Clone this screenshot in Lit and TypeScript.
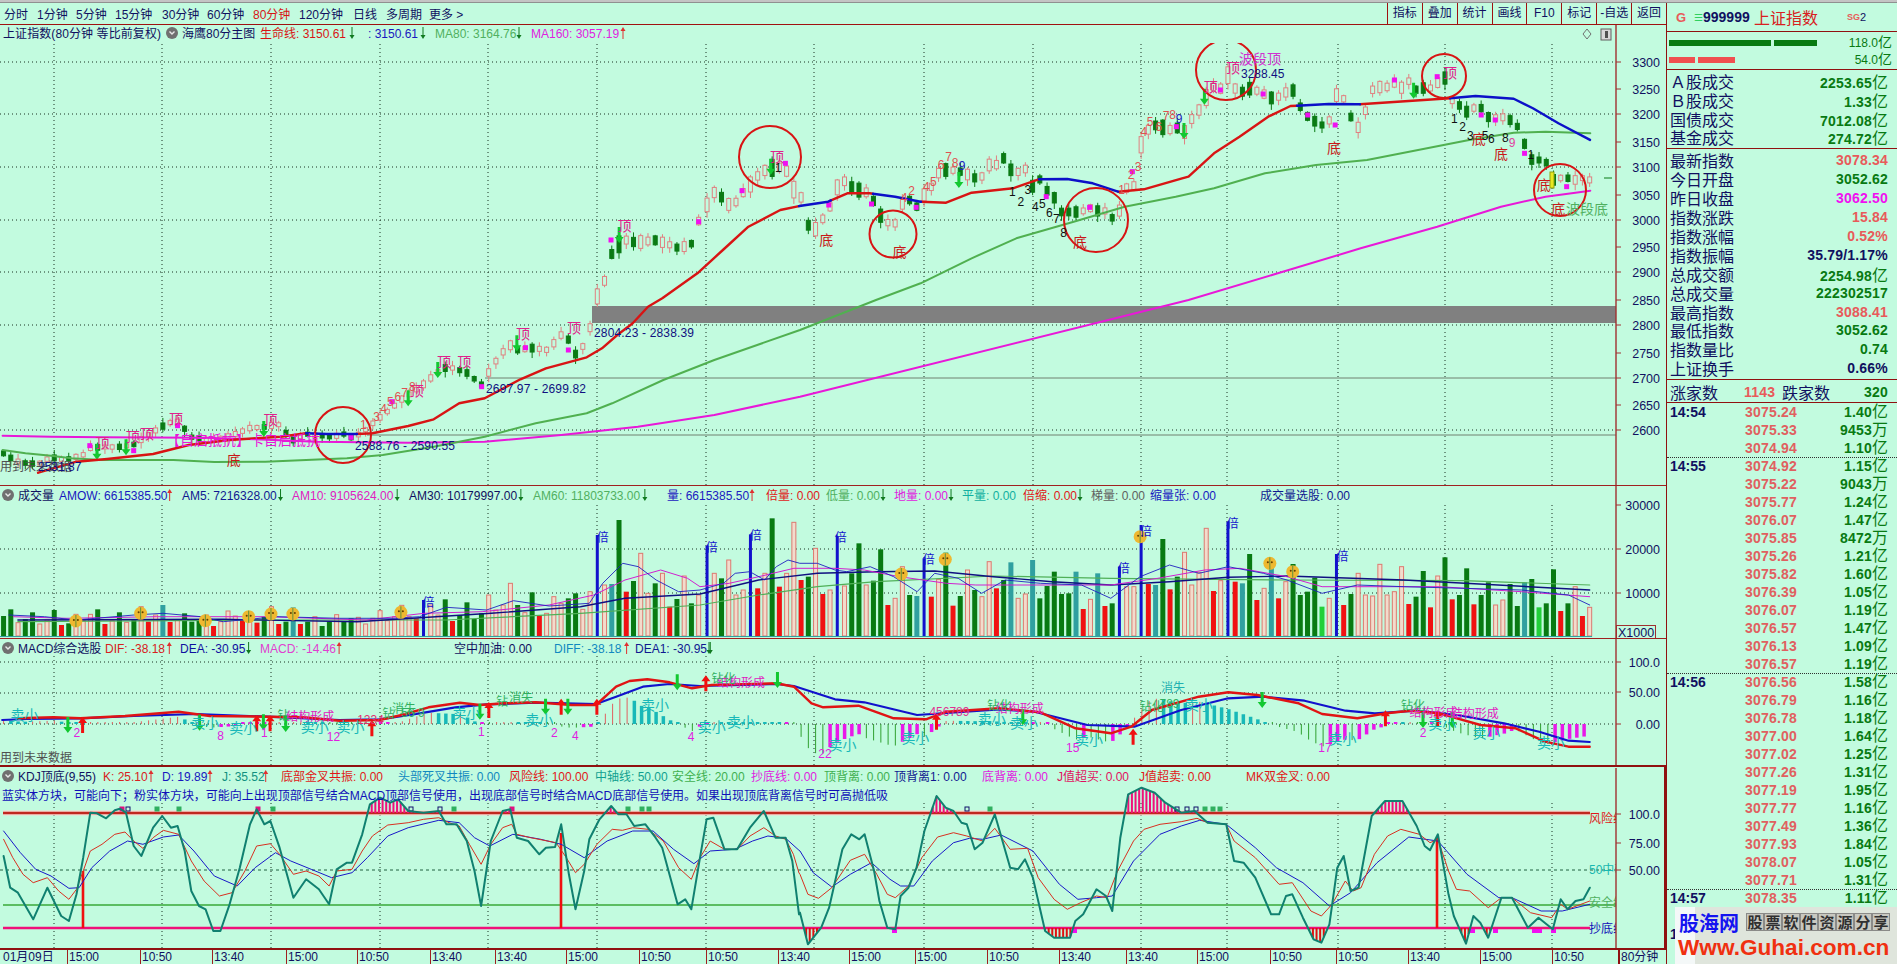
import { LitElement, html, css, svg } from "lit";
import { customElement } from "lit/decorators.js";

type P = [number, number];
const conv = (ox: number, sx: number, oy: number) => (a: number[]): P[] => {
  const r: P[] = [];
  for (let i = 0; i < a.length; i += 2) r.push([ox + a[i] / sx, oy + a[i + 1] / 3]);
  return r;
};
const z1 = conv(0, 2.45, 0);
const z8 = conv(640, 1.568, 0);
const z9 = conv(0, 1.96, 280);
const z4 = conv(0, 2.24, 470);
const z5 = conv(700, 1.704, 470);
const z6 = conv(0, 1.96, 760);
const z7 = conv(800, 1.889, 760);

const interp = (pts: P[], x: number): number => {
  if (x <= pts[0][0]) return pts[0][1];
  for (let i = 1; i < pts.length; i++) {
    if (x <= pts[i][0]) {
      const [a, b] = pts[i - 1];
      const [c, d] = pts[i];
      return b + ((d - b) * (x - a)) / (c - a || 1);
    }
  }
  return pts[pts.length - 1][1];
};
const pl = (pts: P[]) => pts.map((p) => `${p[0].toFixed(1)},${p[1].toFixed(1)}`).join(" ");
const seg = (pts: P[], a: number, b: number): P[] => [
  [a, interp(pts, a)] as P,
  ...pts.filter((p) => p[0] > a && p[0] < b),
  [b, interp(pts, b)] as P,
];

/* ---------- price path (body centres) ---------- */
const PRICE: P[] = ([
  [3,453],[14,460],[25,463],[38,464],[51,457],[64,460],[83,455],[90,448],[102,447],[118,447],[133,445],[148,435],[163,426],[176,420],[184,428],[191,437],[205,440],[224,438],[238,433],[250,428],[264,427],[278,424],[293,440],[306,434],[320,436],[332,437],[344,434],[352,438],[363,432],[372,424],[383,415],[393,407],[403,398],[413,392],[424,384],[434,375],[444,368],[454,368],[467,373],[482,385],[490,370],[500,355],[510,345],[518,350],[533,348],[548,350],[561,335],[569,340],[576,355],[584,345],[591,325],[597,297],[604,283],[611,255],[620,243],[626,240],[633,242],
  [642,242],[654,240],[665,243],[678,248],[691,245],[699,220],[707,205],[713,192],[720,195],[727,205],[736,202],[742,194],[750,185],[761,172],[771,168],[785,167],[794,190],[801,197],[808,225],[815,230],[822,220],[829,210],[836,189],[843,180],[850,186],[858,190],[865,191],[873,200],[880,215],[887,222],[894,227],[901,205],[908,198],[916,208],[924,195],[933,185],[940,170],[946,170],[952,170],[962,172],[975,178],[981,178],[989,165],[996,165],[1004,158],[1011,170],[1018,172],[1025,168],[1032,187],[1039,178],[1046,190],[1053,195],[1061,212],[1068,212],[1076,212],[1083,211],[1090,208],[1097,211],[1104,210],[1112,218],[1120,210],[1127,187],[1134,186],[1141,145],[1148,130],[1154,125],[1162,127],[1169,130],[1176,127],[1184,133],[1191,120],[1199,110],[1206,98],[1213,87],[1220,90],[1228,75],[1234,88],[1243,92],[1251,88],[1264,94],[1271,98],[1278,97],[1285,93],[1292,88],[1299,105],[1308,117],[1316,122],[1322,125],[1328,125],[1336,95],[1343,97],[1350,115],[1357,130],[1365,112],[1372,90],[1380,87],[1387,87],[1394,83],[1402,88],[1408,80],[1415,90],[1423,88],[1431,88],[1437,83],[1445,78],[1452,100],[1459,105],[1466,112],[1474,108],[1481,108],[1488,117],[1495,118],[1502,117],[1510,120],[1518,127],[1525,145],[1532,160],[1539,160],[1546,162],[1553,180],[1560,178],[1567,178],[1575,180],[1582,178],[1590,180],
] as P[]);

const LIFE: P[] = [
  ...z9([75,578,150,545,210,537,300,522,370,495,450,480,550,470,600,460,640,462,680,462,700,462,730,460,800,438,850,418,900,370,950,355,1020,298,1070,265,1150,232,1180,205,1210,165,1240,130,1270,80]),
  ...z8([35,895,90,820,130,750,170,680,220,630,250,618,295,605,325,580,360,580,400,590,440,605,480,608,520,578,585,565,625,538,670,537,710,550,750,575,790,568,850,535,860,530,900,460,940,410,985,350,1020,318,1080,312,1125,313,1270,295,1310,288,1370,296,1400,325,1440,370,1490,420]),
];
const MA80: P[] = [
  ...z9([5,510,50,520,100,527,140,535,200,540,340,540,420,546,520,545,600,540,680,535,750,525,850,500,950,470,1050,430,1150,400,1200,370,1300,300,1400,240,1568,150]),
  ...z8([370,900,440,850,520,775,590,715,680,665,760,620,840,590,900,565,980,520,1060,495,1140,480,1220,450,1300,420,1370,398,1420,395,1490,400]),
];
const MA160: P[] = [
  ...z9([5,467,100,470,200,472,400,473,500,478,620,485,800,488,950,485,1100,465,1250,440,1400,405,1568,350]),
  ...z8([860,900,1000,820,1130,745,1250,680,1350,620,1420,590,1490,572]),
];
const LIFE_BLUE: [number, number][] = [[306,357],[799,831],[873,921],[1039,1118],[1297,1360],[1450,1590]];
const LIFE_RED: [number, number][] = [[38,306],[357,799],[831,873],[921,1039],[1118,1297],[1360,1450]];

/* ---------- volume ---------- */
type V = [string, number];
const vt = (s: string): V[] => s.trim().split(/\s+/).map((t) => [t[0], +t.slice(1)] as V);
const V4 = vt(`G438 G418 P458 G447 G427 P462 P450 G420 R465 G460 P433 P452 P433 G418 R462 P452 G427 P457 G447 P410 R455 P435 T405 R456 P450 G430 G455 G450 P435 R468 P455 P423 P438 R448 P425 R458 G440 P410 R462 G455 T412 R462 G455 P440 G468 G455 P434 G455 G445 P442 P462 P445 P422 P452 P440 P406 P440 R445 B390 P405 P435 G388 R453 G435 G397 G447 G430 P375 P420 P405 P340 G405 P428 G367 R435 P430 P380 P400 G385 G370 P418 P365 B195 P345 T342 G150 R365 G333 P250 P370 G340 P310 R410 G387 P318 G400 P375`);
const V5 = vt(`B228 P310 G325 P270 P375 P360 B193 R355 P310 G145 R350 P310 P157 R330 G320 P235 R372 P360 B198 P348 G310 G220 P345 G332 G238 R405 P385 P290 G375 T378 B265 R380 P328 G248 R407 G378 P300 G360 P380 P275 R355 G330 T277 P385 P372 T270 G385 G348 G305 G372 G370 T305 R417 P388 T310 R408 G400 B290 P350 P350 B165 R342 T345 G207 R358 G320 P247 P345 P307 P175 R363 P332 B155 R335 T340 G252 R390 P355 T270 R385 P335 G282 G375 G365 G323 L410 P385 B252 R405 G372 P310 P375 P378 P283 P375 P365 P290 R402 G380 G303 R412 P318 G262 R388 G375 G295 R403 G375 G337 P405 P390 G342 G408 T337 G327 L412 G400 G298 R423 G400 P350 R438 P412`);
const BARS: { x: number; top: number; k: string }[] = [
  ...V4.map(([k, t], i) => ({ x: (8 + (i * (1565 - 8)) / (V4.length - 1)) / 2.24, top: 470 + t / 3, k })),
  ...V5.map(([k, t], i) => ({ x: 700 + (12 + (i * (1516 - 12)) / (V5.length - 1)) / 1.704, top: 470 + t / 3, k })),
];
const VOL_C: Record<string, string> = { G: "#087a12", R: "#f01212", T: "#30a0a0", B: "#1212cc", L: "#22d03a" };
const smile4 = z4([170,453,315,430,460,452,557,440,607,432,656,432,898,427]);
const smile5 = z5([343,312,418,268,750,200,971,280,1010,305]);
const bei = [...z4([960,395,1350,200]), ...z5([20,232,95,195,240,200,390,268,722,295,760,182,908,160,1095,257])];
const VOL_LINES: { c: string; w: number; p: P[] }[] = [
  { c: "#50b058", w: 1.2, p: [...z4([40,455,600,450,1000,450,1300,430,1568,405]), ...z5([100,375,200,350,300,335,500,318,700,325,1000,330,1300,332,1516,345])] },
  { c: "#101080", w: 1.4, p: [...z4([40,450,500,448,800,455,1100,430,1300,410,1400,385,1568,372]), ...z5([100,330,200,310,300,305,400,303,500,320,600,335,700,345,800,335,900,322,1000,318,1200,330,1516,360])] },
  { c: "#d020d0", w: 1, p: [...z4([30,440,150,445,350,440,600,440,820,450,950,430,1080,425,1230,405,1330,375,1400,330,1480,300,1540,325,1568,350]), ...z5([50,340,100,320,160,295,230,295,280,300,340,320,420,340,470,345,540,345,640,345,700,345,780,325,860,300,920,295,1000,320,1060,350,1120,350,1260,350,1400,365,1516,380])] },
  { c: "#2020c0", w: 0.9, p: [...z4([20,435,100,440,170,450,300,435,365,430,450,440,500,455,620,440,760,445,880,445,940,440,1000,412,1090,420,1150,392,1230,408,1320,400,1350,340,1395,280,1430,290,1470,330,1520,365,1568,360]), ...z5([40,340,60,310,85,305,110,330,130,290,150,270,170,280,200,280,230,300,250,305,290,290,330,320,370,365,400,310,440,325,480,370,520,330,580,340,650,345,700,385,750,320,800,285,850,310,900,290,960,310,1000,330,1060,370,1120,345,1200,350,1300,355,1400,360,1480,375,1516,405])] },
];

/* ---------- MACD ---------- */
const DIF: P[] = [...z4([40,745,120,742,180,745,280,738,400,725,470,738,600,740,680,742,760,752,850,750,900,735,960,712,1030,698,1075,705,1130,700,1200,697,1280,705,1335,705,1380,650,1410,633,1450,628,1500,637,1550,655]), ...z5([20,645,130,640,160,650,190,700,210,712,270,707,330,745,385,748,420,725,510,715,580,727,640,775,700,790,735,770,770,720,850,680,900,667,950,675,1020,700,1060,732,1120,745,1170,730,1210,722,1260,730,1330,765,1390,775,1440,815,1480,830,1516,830])];
const DEA: P[] = [...z4([5,750,60,747,180,745,300,738,440,732,600,740,760,750,850,748,940,730,1020,712,1090,703,1200,698,1335,702,1380,680,1440,650,1500,642]), ...z5([0,648,130,642,160,648,230,688,280,697,370,735,510,718,570,725,660,765,740,770,820,720,900,685,960,680,1030,692,1100,722,1150,730,1220,722,1290,735,1370,760,1430,785,1480,812,1516,816])];
const sell = [...z4([55,735,460,760,545,773,705,770,785,772,1045,730,1208,750,1467,705]), ...z5([20,772,70,755,243,826,367,805,497,748,552,760,663,810,850,705,1095,807,1265,762,1340,790,1450,820])];
const upArr = [...z4([185,765,575,760,605,760,833,775,1095,720,1257,710,1337,710]), ...z5([10,640,403,755,738,800,1168,745,1257,745])];
const dnArr = [...z4([152,765,447,758,590,757,640,762,1075,725,1222,710,1272,710,1517,637]), ...z5([132,630,550,742,958,690,1232,750,1282,750])];
const macdDigits: [P, string][] = [
  [z4([172,787])[0],"2"],[z4([494,795])[0],"8"],[z4([592,785])[0],"1"],[z4([747,797])[0],"12"],[z4([1078,782])[0],"1"],[z4([1242,785])[0],"2"],[z4([1289,795])[0],"4"],[z4([1548,797])[0],"4"],
  [z5([213,850])[0],"22"],[z5([635,830])[0],"15"],[z5([1065,830])[0],"17"],[z5([1232,787])[0],"2"],
];
const macdText: [P, string, string][] = [
  [z4([635,735])[0],"钻","#30b060"],[z4([870,730])[0],"钻","#30b060"],[z4([1125,692])[0],"钻","#30b060"],
  [z4([1167,680])[0],"消失","#30b060"],[z4([905,715])[0],"消失","#30b060"],
  [z4([695,738])[0],"结构形成","#e020c0"],[z5([70,635])[0],"结构形成","#e020c0"],[z5([545,715])[0],"结构形成","#e020c0"],[z5([1250,725])[0],"结构形成","#e020c0"],[z5([1320,730])[0],"结构形成","#e020c0"],
  [z5([40,625])[0],"钻化","#30b060"],[z5([510,705])[0],"钻化","#30b060"],[z5([770,708])[0],"钻化","#30b060"],[z5([1215,705])[0],"钻化","#30b060"],
  [z5([806,652])[0],"消失","#20b0b0"],
  [z4([830,748])[0],"1234","#e03070"],[z4([925,725])[0],"56 9","#30b060"],[z5([425,722])[0],"456789","#e03090"],[z5([800,700])[0],"789","#30b060"],
];

/* ---------- KDJ ---------- */
const J: P[] = [
  ...z6([7,285,20,380,35,395,65,475,93,380,120,465,135,480,150,400,163,290,177,155,190,157,208,172,225,148,235,143,247,155,262,255,277,285,300,200,318,165,335,200,348,195,362,270,375,390,390,435,403,445,418,510,432,510,450,430,470,320,490,190,503,145,518,190,530,180,548,260,575,410,600,355,625,385,645,430,660,325,680,305,690,305,710,220,725,130,745,110,765,125,780,115,800,150,830,155,860,150,875,190,895,190,915,240,930,330,943,435,962,240,985,150,1000,145,1013,230,1035,240,1057,280,1070,260,1088,258,1100,190,1115,340,1128,445,1145,330,1155,235,1175,175,1198,135,1212,160,1228,160,1243,195,1265,190,1285,230,1298,260,1328,430,1343,415,1355,445,1372,290,1385,175,1398,170,1420,265,1445,265,1470,200,1497,150,1520,230,1540,230,1553,300,1566,460]),
  ...z7([0,455,15,550,40,500,55,440,80,265,97,220,112,235,122,220,140,330,150,420,165,500,180,505,190,405,205,380,220,320,235,210,258,105,275,140,290,150,305,185,315,190,330,265,345,245,368,160,397,320,412,325,425,295,440,350,463,510,480,530,510,530,520,480,535,460,560,385,578,405,590,450,605,230,620,100,645,80,670,95,690,125,720,155,745,150,770,185,805,190,820,300,838,305,860,350,890,460,905,460,918,405,930,400,950,470,970,535,985,545,1000,490,1015,320,1027,285,1040,390,1055,380,1080,165,1105,120,1138,120,1165,195,1180,255,1190,268,1205,220,1225,400,1235,465,1258,548,1272,465,1285,485,1300,530,1325,410,1345,410,1375,500,1395,470,1422,505,1437,415,1450,445,1465,420,1480,415,1492,380]),
];
const K: P[] = [
  ...z6([7,235,25,290,45,340,65,365,93,350,115,390,135,415,150,385,163,330,177,270,200,250,225,220,245,213,262,240,280,262,300,230,320,208,350,220,375,300,400,360,430,405,455,395,480,330,503,255,530,248,548,280,575,340,600,330,625,345,645,375,660,330,690,325,710,270,730,225,760,192,800,185,830,175,860,170,880,185,900,195,920,250,943,310,962,250,985,200,1003,190,1013,220,1040,230,1090,245,1110,290,1128,335,1145,310,1170,250,1200,205,1220,208,1240,200,1270,205,1300,240,1330,320,1355,355,1372,290,1392,240,1420,265,1445,265,1470,225,1497,200,1520,225,1540,235,1555,280,1566,336]),
  ...z7([0,340,15,400,35,412,60,380,95,298,122,280,145,340,165,400,180,410,205,375,230,290,260,228,290,215,315,225,345,240,368,202,397,265,430,262,450,350,480,415,505,445,530,425,560,405,580,410,600,330,630,240,650,205,680,190,720,182,750,172,770,185,805,190,820,240,860,290,905,370,930,365,965,450,985,465,1005,430,1030,360,1045,390,1060,380,1085,280,1110,225,1135,205,1170,220,1190,245,1205,235,1225,330,1240,385,1265,390,1300,440,1325,410,1345,410,1380,455,1420,470,1437,430,1450,445,1492,420]),
];
const D: P[] = [
  ...z6([7,210,40,275,70,325,100,345,135,382,155,380,180,320,215,270,250,240,280,250,320,228,350,222,380,270,420,345,465,375,500,320,540,275,570,300,610,325,650,350,690,335,720,290,760,225,800,200,860,178,900,185,930,230,960,255,1005,220,1060,235,1100,250,1145,290,1190,240,1240,210,1280,210,1320,265,1360,308,1392,270,1440,265,1475,240,1505,225,1540,232,1566,268]),
  ...z7([0,270,25,335,60,378,95,340,135,305,170,355,190,375,215,375,250,300,290,245,320,232,345,235,380,222,440,270,490,370,525,415,560,410,590,405,630,300,680,220,720,195,755,178,805,190,860,260,900,320,950,365,1000,435,1040,395,1090,305,1150,228,1205,240,1260,340,1320,410,1345,410,1400,450,1440,450,1492,430]),
];
const kdjSq: [number, string][] = [[126,"#10106a"],[120,"#e01080"],[155,"#30b060"],[177,"#30b060"],[256,"#e01080"],[271,"#30b060"],[409,"#10106a"],[438,"#10106a"],[452,"#30b060"],[510,"#e01080"],[626,"#30b060"],[640,"#30b060"],[647,"#30b060"],[965,"#10106a"],[988,"#30b060"],[1175,"#10106a"],[1185,"#10106a"],[1194,"#10106a"],[1203,"#30b060"],[1211,"#30b060"],[1218,"#30b060"]];
const kdjPink: number[] = [892,1072,1470,1493,1532,1537,1551];

/* ---------- grids, labels ---------- */
const VGRID = [54,162,271,380,488,597,706,814,924,1033,1141,1227,1338,1445,1552];
const HGRID = [62,114,167,220,272,325,430];
const PRICES: [string, number][] = [["3300",62],["3250",89],["3200",114],["3150",142],["3100",167],["3050",195],["3000",220],["2950",247],["2900",272],["2850",300],["2800",325],["2750",353],["2700",378],["2650",405],["2600",430]];
const circles: [number, number, number][] = [[343,435,28],[770,157,31],[893,234,23.5],[1096,220,32],[1226,70,30],[1444,76,22],[1560,190,26]];
const ding = [...z9([201,490,260,472,288,462,345,417,530,420,817,332,870,247,910,245,1025,163,1125,143]), ...z1([1530,677]), ...z8([215,470,895,260,930,205,1270,218])];
const di = [...z9([458,540]), ...z8([292,720,407,755,690,725,1088,445,1350,462,1417,555,1440,627,1315,418])];
const redDigits: [P, string][] = [...([[712,435,"1"],[738,410,"3"],[752,388,"4"],[765,367,"5"],[780,352,"6"],[793,338,"7"],[808,320,"8"]] as [number,number,string][]).map((d) => [z9([d[0],d[1]])[0],d[2]] as [P,string]),
  ...([[414,593,"4"],[426,572,"2"],[449,560,"4"],[460,545,"5"],[472,495,"6"],[484,470,"7"],[494,490,"8"],[755,570,"1"],[770,525,"2"],[781,500,"3"],[790,397,"4"],[800,367,"5"],[813,380,"6"],[825,347,"7"],[835,345,"8"]] as [number,number,string][]).map((d) => [z8([d[0],d[1]])[0],d[2]] as [P,string])];
const blackDigits: [P, string][] = ([[217,505,"1"],[584,575,"1"],[597,605,"2"],[608,570,"3"],[620,622,"4"],[631,612,"5"],[642,640,"6"],[653,657,"7"],[664,698,"8"],[1277,357,"1"],[1290,382,"2"],[1302,408,"3"],[1325,408,"5"],[1335,418,"6"],[1357,415,"8"],[1397,465,"1"]] as [number,number,string][]).map((d) => [z8([d[0],d[1]])[0],d[2]] as [P,string]);
const squares = [...z8([92,665,160,572,228,490,296,615,363,612,433,622,637,590,705,622,772,515,841,380,910,270,977,282,1047,345,1090,375,1183,240,1250,230,1319,345,1341,360,1387,460,1453,560]), ...z9([176,497,262,512,348,437,688,472,768,365,1030,203,1114,210,944,320]), ...z1([1497,720])];
const greenArr = [...z8([205,500,500,540,853,393,885,290,1213,272]), ...z9([190,515,247,502,517,447,800,355,858,270,1013,190]), ...z1([1517,705])];

type L = [number, string, string, string?];
const LEG_VOL: L[] = [[18,"成交量","#101060"],[59,"AMOW: 6615385.50","#1818c0","u"],[182,"AM5: 7216328.00","#101890","d"],[292,"AM10: 9105624.00","#e020c0","d"],[409,"AM30: 10179997.00","#101060","d"],[533,"AM60: 11803733.00","#50b060","d"],[667,"量: 6615385.50","#2020c0","u"],[766,"倍量: 0.00","#e01818"],[826,"低量: 0.00","#50b060","d"],[894,"地量: 0.00","#e020e0","d"],[962,"平量: 0.00","#10b0a0"],[1023,"倍缩: 0.00","#e01818","d"],[1091,"梯量: 0.00","#606060"],[1150,"缩量张: 0.00","#1818c0"],[1260,"成交量选股: 0.00","#101890"]];
const LEG_MACD: L[] = [[18,"MACD综合选股","#101060"],[105,"DIF: -38.18","#d82020","u"],[180,"DEA: -30.95","#1010a0","d"],[260,"MACD: -14.46","#e040d0","u"],[454,"空中加油: 0.00","#101060"],[554,"DIFF: -38.18","#1088c0","u"],[635,"DEA1: -30.95","#101890","d"]];
const LEG_KDJ: L[] = [[18,"KDJ顶底(9,55)","#101060"],[103,"K: 25.10","#d82020","u"],[162,"D: 19.89","#1818c0","u"],[222,"J: 35.52","#109080","u"],[281,"底部金叉共振: 0.00","#e01818"],[398,"头部死叉共振: 0.00","#1088c0"],[509,"风险线: 100.00","#e01818"],[595,"中轴线: 50.00","#10a090"],[672,"安全线: 20.00","#40b050"],[751,"抄底线: 0.00","#e020e0"],[824,"顶背离: 0.00","#40b050"],[894,"顶背离1: 0.00","#101890"],[982,"底背离: 0.00","#e020e0"],[1057,"J值超买: 0.00","#e01060"],[1139,"J值超卖: 0.00","#e01818"],[1246,"MK双金叉: 0.00","#e01818"]];

const TIMES: [number, string][] = [[67,"15:00"],[140,"10:50"],[212,"13:40"],[286,"15:00"],[357,"10:50"],[430,"13:40"],[495,"13:40"],[566,"15:00"],[639,"10:50"],[706,"10:50"],[778,"13:40"],[849,"15:00"],[915,"15:00"],[987,"10:50"],[1059,"13:40"],[1126,"13:40"],[1197,"15:00"],[1270,"10:50"],[1336,"10:50"],[1408,"13:40"],[1480,"15:00"],[1552,"10:50"]];

/* ---------- svg helpers ---------- */
const BG = "#c2fbdf";
const textWidth = (t: string) => {
  let w = 0;
  for (const c of t) {
    if (c.charCodeAt(0) > 127) w += 12;
    else if (/[0-9A-Z_]/.test(c)) w += /[0-9]/.test(c) ? 6.67 : /[MW]/.test(c) ? 10.5 : /[IJ]/.test(c) ? 4 : 8.3;
    else if (/[.: ]/.test(c)) w += 3.34;
    else if (c === "-") w += 4;
    else w += 6;
  }
  return w;
};
const vgrid = (y1: number, y2: number, xs = VGRID) => xs.map((x) => svg`<line class="grid" x1=${x} x2=${x} y1=${y1} y2=${y2}></line>`);
const hgrid = (ys: number[]) => ys.map((y) => svg`<line class="grid" x1="0" x2="1616" y1=${y} y2=${y}></line>`);
const axis = (y1: number, y2: number, labels: [string, number][], extra: number[] = []) => svg`
  <line class="axis" x1="1616" x2="1616" y1=${y1} y2=${y2}></line>
  ${[...labels.map((l) => l[1]), ...extra].map((y) => svg`<line class="tick" x1="1616" x2="1621" y1=${y} y2=${y}></line>`)}
  ${labels.map(([t, y]) => svg`<text class="scale" x="1660" y=${y + 4.5} text-anchor="end">${t}</text>`)}`;
const upMark = (x: number, y: number, c = "#e03030") => svg`<path d="M${x} ${y}l-2.5 4h2v8h1v-8h2z" fill=${c} stroke="none"></path>`;
const dnMark = (x: number, y: number, c = "#107a20") => svg`<path d="M${x} ${y + 12}l-2.5 -4h2v-8h1v8h2z" fill=${c} stroke="none"></path>`;
const bigUp = (x: number, y: number) => svg`<path d="M${x} ${y - 8}l-4.5 6h3v10h3v-10h3z" fill="#f01010"></path>`;
const bigDn = (x: number, y: number) => svg`<path d="M${x} ${y + 8}l-4.5 -6h3v-10h3v10h3z" fill="#12c830"></path>`;
const chip = () => svg`<circle cx="8" cy="0" r="6" fill="#707070"></circle><path d="M5.5 -1.5L8 1l2.5 -2.5" fill="none" stroke="#e8e8e8" stroke-width="1.4"></path>`;
const legend = (y: number, items: L[]) => svg`
  <g transform="translate(0 ${y})">${chip()}</g>
  ${items.map(([x, t, c, m]) => {
    const w = textWidth(t);
    return svg`<text class="lg" x=${x} y=${y + 4.5} fill=${c}>${t}</text>
    ${m === "u" ? upMark(x + w + 3, y - 6) : m === "d" ? dnMark(x + w + 3, y - 6) : ""}`;
  })}`;

const mainChart = () => svg`<svg class="panel" viewBox="0 25 1666 461" width="1666" height="461">
    <defs><clipPath id="mclip"><rect x="0" y="43" width="1616" height="443"></rect></clipPath></defs>
    ${vgrid(44, 486)}${hgrid(HGRID)}
    <rect x="592" y="306" width="1024" height="17" fill="#808080"></rect>
    <line x1="485" x2="1616" y1="378" y2="378" stroke="#708070"></line>
    <line x1="367" x2="1616" y1="435" y2="435" stroke="#708070"></line>
    <g>${BARS.map((b, i) => {
      const y = interp(PRICE, b.x);
      const vh = 636 - b.top;
      const h = Math.min(12, 1.2 + vh / 16);
      const wa = 1 + ((i * 7) % 5);
      const wb = 1 + ((i * 11) % 6);
      const green = b.k === "G" || b.k === "T" || b.k === "L";
      const c = green ? "#0a7a14" : "#e08080";
      return svg`<line x1=${b.x} x2=${b.x} y1=${y - h - wa} y2=${y + h + wb} stroke=${c}></line>
        <rect x=${b.x - 2} y=${y - h} width="4" height=${h * 2} fill=${green ? c : BG} stroke=${c}></rect>`;
    })}</g>
    <rect x="1550" y="172" width="4" height="16" fill="#e8e820" stroke="#90a010"></rect>
    <line x1="1604" x2="1612" y1="178" y2="178" stroke="#0a7a14"></line>
    ${squares.map((p) => svg`<rect x=${p[0] - 2.5} y=${p[1] - 2.5} width="5" height="5" fill="#f010f0"></rect>`)}
    ${greenArr.map((p) => bigDn(p[0], p[1]))}
    <polyline class="ln" points=${pl(MA160.filter((p) => p[0] < 1591))} stroke="#e818d8" stroke-width="2"></polyline>
    <polyline class="ln" points=${pl(MA80)} stroke="#50b050" stroke-width="2"></polyline>
    ${LIFE_RED.map(([a, b]) => svg`<polyline class="ln" points=${pl(seg(LIFE, a, b))} stroke="#d81414" stroke-width="2.4"></polyline>`)}
    ${LIFE_BLUE.map(([a, b]) => svg`<polyline class="ln" points=${pl(seg(LIFE, a, b))} stroke="#0c10c8" stroke-width="2.4"></polyline>`)}
    <g clip-path="url(#mclip)">${circles.map(([x, y, r]) => svg`<circle cx=${x} cy=${y} r=${r} fill="none" stroke="#d81414" stroke-width="2"></circle>`)}</g>
    ${ding.map((p) => svg`<text class="sig" x=${p[0]} y=${p[1] + 5} text-anchor="middle" fill="#e0208a">顶</text>`)}
    ${di.map((p) => svg`<text class="sig" x=${p[0]} y=${p[1] + 5} text-anchor="middle" fill="#c81818">底</text>`)}
    ${redDigits.map(([p, t]) => svg`<text class="lg" x=${p[0]} y=${p[1] + 4} text-anchor="middle" fill="#e05050">${t}</text>`)}
    ${blackDigits.map(([p, t]) => svg`<text class="lg" x=${p[0]} y=${p[1] + 4} text-anchor="middle" fill="#101010">${t}</text>`)}
    <text class="lg" x="1179" y="123" text-anchor="middle" fill="#2020c0">9</text>
    <text class="lg" x="962" y="170" text-anchor="middle" fill="#2020c0">9</text>
    <text class="lg" x="1512" y="147" text-anchor="middle" fill="#e040a0">9</text>
    <text class="sig" x="1239" y="64" fill="#d030d0">波段顶</text>
    <text class="lg" x="1241" y="78" fill="#101080">3288.45</text>
    <text class="sig" x="1566" y="214" fill="#50b060">波段底</text>
    <text class="lg" x="594" y="337" fill="#101080" textLength="100">2804.23 - 2838.39</text>
    <text class="lg" x="486" y="393" fill="#101080" textLength="100">2697.97 - 2699.82</text>
    <text class="lg" x="355" y="450" fill="#101080" textLength="100">2588.76 - 2590.55</text>
    <text class="sig" x="166" y="445" fill="#e818d8">【自启抵抗】卡自启抵抗</text>
    <text class="lg" x="0" y="471" fill="#505050">用到未来数据</text>
    <text class="lg" x="38" y="471" fill="#101080">2531.87</text>
    <text class="lg" x="3" y="37.5" fill="#101060" textLength="158">上证指数(80分钟 等比前复权)</text>
    <g transform="translate(164 33)">${chip()}</g>
    <text class="lg" x="182" y="37.5" fill="#101060">海鹰80分主图</text>
    <text class="lg" x="260" y="37.5" fill="#d81414">生命线: 3150.61</text>
    ${dnMark(352, 27)}
    <text class="lg" x="368" y="37.5" fill="#1818c0">: 3150.61</text>
    ${dnMark(423, 27)}
    <text class="lg" x="435" y="37.5" fill="#50b060">MA80: 3164.76</text>
    ${dnMark(519, 27)}
    <text class="lg" x="531" y="37.5" fill="#e020e0">MA160: 3057.19</text>
    ${upMark(623, 27)}
    <path d="M1587 29l4 5 -4 5 -4 -5z" fill="none" stroke="#707070"></path>
    <rect x="1601" y="29" width="10" height="11" fill="#d8d8d8" stroke="#606060"></rect><rect x="1605" y="31" width="3" height="7" fill="#505050"></rect>
    ${axis(25, 486, PRICES)}
  </svg>`;

const volChart = () => svg`<svg class="panel" viewBox="0 486 1666 153" width="1666" height="153">
  ${vgrid(505, 636)}${hgrid([549, 593])}
  ${BARS.map((b) => b.k === "P"
    ? svg`<rect x=${b.x - 2} y=${b.top} width="4" height=${636 - b.top} fill="#f2dccc" stroke="#dd7a70"></rect>`
    : svg`<rect x=${b.x - (b.k === "B" ? 1.5 : 2.5)} y=${b.top} width=${b.k === "B" ? 3 : 5} height=${636 - b.top} fill=${VOL_C[b.k]}></rect>`)}
  <line x1="0" x2="1592" y1="636.5" y2="636.5" stroke="#30a0a0"></line>
  ${VOL_LINES.map((l) => svg`<polyline class="ln" points=${pl(l.p)} stroke=${l.c} stroke-width=${l.w}></polyline>`)}
  ${[...smile4, ...smile5].map((p) => svg`<circle cx=${p[0]} cy=${p[1]} r="6.5" fill="#eeb830"></circle><circle cx=${p[0] - 2} cy=${p[1] - 1} r="1" fill="#604000"></circle><circle cx=${p[0] + 2} cy=${p[1] - 1} r="1" fill="#604000"></circle><line x1=${p[0]} x2=${p[0]} y1=${p[1] - 6} y2=${p[1] + 6} stroke="#208040" stroke-width="0.7"></line>`)}
  ${bei.map((p) => svg`<text class="lg" x=${p[0]} y=${p[1] + 5} text-anchor="middle" fill="#1212cc">倍</text>`)}
  ${legend(495, LEG_VOL)}
  ${axis(486, 639, [["30000", 505], ["20000", 549], ["10000", 593]])}
  <rect x="1616.5" y="625.5" width="39" height="14" fill=${BG} stroke="#a03030"></rect>
  <text class="scale" x="1618" y="637">X1000</text>
</svg>`;

const macdChart = () => {
  const hist: unknown[] = [];
  let prev = 0;
  for (let x = 3.6; x < 1591; x += 7.25) {
    const h = (interp(DEA, x) - interp(DIF, x)) * 2.5;
    const up = Math.abs(h) >= Math.abs(prev);
    const pos = h >= 0;
    const c = pos ? (up ? "#e06060" : "#18b8b8") : up ? "#30a030" : "#e818e8";
    const hh = Math.abs(h) < 2 ? 2 : h;
    hist.push(svg`<line x1=${x} x2=${x} y1="724" y2=${724 - hh} stroke=${c} stroke-width=${up ? 1 : 3.5}></line>`);
    prev = h;
  }
  return svg`<svg class="panel" viewBox="0 639 1666 127" width="1666" height="127">
    ${vgrid(656, 766)}${hgrid([662, 693, 724])}
    ${hist}
    <polyline class="ln" points=${pl(DEA)} stroke="#1212cc" stroke-width="2.2"></polyline>
    <polyline class="ln" points=${pl(DIF)} stroke="#e01414" stroke-width="2.4"></polyline>
    ${upArr.map((p) => bigUp(p[0], p[1]))}
    ${dnArr.map((p) => bigDn(p[0], p[1]))}
    ${macdText.map(([p, t, c]) => svg`<text class="lg" x=${p[0]} y=${p[1] + 5} text-anchor="middle" fill=${c}>${t}</text>`)}
    ${sell.map((p) => svg`<text class="sig" x=${p[0]} y=${p[1] + 5} text-anchor="middle" fill="#18b8b8">卖小</text>`)}
    ${macdDigits.map(([p, t]) => svg`<text class="lg" x=${p[0]} y=${p[1] + 5} text-anchor="middle" fill="#e020e0">${t}</text>`)}
    <text class="lg" x="0" y="762" fill="#505050">用到未来数据</text>
    ${legend(648, LEG_MACD)}
    ${dnMark(709, 642)}
    ${axis(639, 766, [["100.0", 662], ["50.00", 692], ["0.00", 724]])}
  </svg>`;
};

const kdjChart = () => {
  const st: unknown[] = [];
  for (let x = 350; x < 1591; x += 3.62) {
    const y = interp(J, x);
    if (y < 811) st.push(svg`<line x1=${x} x2=${x} y1=${y} y2="812" stroke="#f0107a" stroke-width="2"></line>`);
    if (y > 928) st.push(svg`<line x1=${x} x2=${x} y1="927" y2=${y} stroke="#e01010" stroke-width="2"></line>`);
  }
  return svg`<svg class="panel" viewBox="0 766 1666 181" width="1666" height="181">
    ${vgrid(802, 947)}
    <line x1="0" x2="1616" y1="869" y2="869" stroke="#206040" stroke-dasharray="3 3"></line>
    <line x1="3" x2="1616" y1="904" y2="904" stroke="#38a838" stroke-width="1.4"></line>
    <line x1="3" x2="1590" y1="812" y2="812" stroke="#f8d8d0" stroke-width="5"></line>
    <line x1="3" x2="1590" y1="812" y2="812" stroke="#c02820" stroke-width="2.6"></line>
    <line x1="3" x2="1590" y1="927" y2="927" stroke="#f0107a" stroke-width="2.4"></line>
    ${st}
    ${[83, 561, 1437].map((x, i) => svg`<line x1=${x} x2=${x} y1=${[870, 832, 837][i]} y2="927" stroke="#f01010" stroke-width="2.6"></line>`)}
    ${kdjSq.map(([x, c]) => svg`<rect x=${x} y="806" width="4" height="4" fill=${c === "#10106a" ? "none" : c} stroke=${c}></rect>`)}
    ${kdjPink.map((x) => svg`<rect x=${x} y="928" width="5" height="4" fill="#f010f0"></rect>`)}
    <polyline class="ln" points=${pl(D)} stroke="#1818c8" stroke-width="1"></polyline>
    <polyline class="ln" points=${pl(K)} stroke="#d83020" stroke-width="1"></polyline>
    <polyline class="ln" points=${pl(J)} stroke="#108070" stroke-width="2"></polyline>
    ${legend(775, LEG_KDJ)}
    <text class="lg" x="2" y="798.5" fill="#1010b8" textLength="886">蓝实体方块，可能向下；粉实体方块，可能向上出现顶部信号结合MACD顶部信号使用，出现底部信号时结合MACD底部信号使用。如果出现顶底背离信号时可高抛低吸</text>
    <text class="lg" x="1589" y="821.5" fill="#e01818">风险线</text>
    <text class="lg" x="1589" y="872.5" fill="#18b8b0">50中轴</text>
    <text class="lg" x="1589" y="905.5" fill="#50b060">安全线</text>
    <text class="lg" x="1589" y="931.5" fill="#1010b8">抄底线</text>
    <rect x="1616" y="767" width="50" height="180" fill=${BG}></rect>
    <line x1="1665" x2="1665" y1="766" y2="947" stroke="#901010" stroke-width="2"></line>
    ${axis(767, 947, [["100.0", 813], ["75.00", 842], ["50.00", 869]], [])}
  </svg>`;
};

const RIGHT_TOP: [string, string, string?][] = [["Ａ股成交", "2253.65", "亿"], ["Ｂ股成交", "1.33", "亿"], ["国债成交", "7012.08", "亿"], ["基金成交", "274.72", "亿"]];
const R = "#e85a5a", GN = "#087a12", NV = "#101060";
const QUOTE: [string, string, string, string?][] = [
  ["最新指数", "3078.34", R], ["今日开盘", "3052.62", GN], ["昨日收盘", "3062.50", "#f010f0"], ["指数涨跌", "15.84", R], ["指数涨幅", "0.52%", R], ["指数振幅", "35.79/1.17%", NV],
  ["总成交额", "2254.98", GN, "亿"], ["总成交量", "222302517", GN], ["最高指数", "3088.41", R], ["最低指数", "3052.62", GN], ["指数量比", "0.74", GN], ["上证换手", "0.66%", NV],
];
const TICKS: [string, string, string, string, boolean][] = `14:54 3075.24 1.40亿|. 3075.33 9453万|. 3074.94 1.10亿|14:55 3074.92 1.15亿|. 3075.22 9043万|. 3075.77 1.24亿|. 3076.07 1.47亿|. 3075.85 8472万|. 3075.26 1.21亿|. 3075.82 1.60亿|. 3076.39 1.05亿|. 3076.07 1.19亿|. 3076.57 1.47亿|. 3076.13 1.09亿|. 3076.57 1.19亿|14:56 3076.56 1.58亿|. 3076.79 1.16亿|. 3076.78 1.18亿|. 3077.00 1.64亿|. 3077.02 1.25亿|. 3077.26 1.31亿|. 3077.19 1.95亿|. 3077.77 1.16亿|. 3077.49 1.36亿|. 3077.93 1.84亿|. 3078.07 1.05亿|. 3077.71 1.31亿|14:57 3078.35 1.11亿`
  .split("|").map((r, i) => {
    const [t, p, v] = r.split(" ");
    return [t === "." ? "" : t, p, v.slice(0, -1), v.slice(-1), t !== "." && i > 0] as [string, string, string, string, boolean];
  });

@customElement("app-root")
export class AppRoot extends LitElement {
  static styles = css`
    :host { display: block; width: 1897px; height: 964px; overflow: hidden; background: #c2fbdf; font-family: "Liberation Sans", "Noto Sans CJK SC", sans-serif; font-size: 12px; color: #101060; }
    .page { display: flex; width: 1897px; height: 964px; flex-direction: column; }
    .strip { height: 3px; background: #c4c4c4; border-bottom: 1px solid #909090; box-sizing: border-box; flex: none; }
    .body { display: flex; flex: 1; min-height: 0; }
    .left { width: 1666px; flex: none; display: flex; flex-direction: column; position: relative; }
    .toolbar { height: 22px; flex: none; display: flex; align-items: center; justify-content: space-between; border-bottom: 1px solid #a01010; box-sizing: border-box; }
    .periods { display: flex; padding-left: 4px; }
    .periods span { white-space: nowrap; }
    .periods .on { color: #d81414; }
    .tools { display: flex; height: 100%; }
    .tools span { border-left: 1px solid #a01010; width: 34.9px; text-align: center; line-height: 20px; box-sizing: border-box; white-space: nowrap; }
    .panel { display: block; flex: none; }
    .sep { height: 0; border-top: 1px solid #a02020; margin-top: -1px; position: relative; width: 1666px; }
    .sep.thick { border-top-width: 2px; border-color: #901010; }
    .timeaxis { display: flex; height: 17px; flex: none; border-top: 2px solid #901010; box-sizing: border-box; line-height: 15px; white-space: nowrap; }
    .timeaxis .c { border-left: 1px solid #a02020; padding-left: 1px; overflow: hidden; box-sizing: border-box; }
    .timeaxis .first { padding-left: 3px; border-left: 0; }
    .timeaxis .last { padding-left: 1px; border-left: 2px solid #901010; flex: 1; }
    .right { flex: 1; min-width: 0; border-left: 1px solid #901010; position: relative; overflow: hidden; box-sizing: border-box; padding-left: 2px; }
    .head { height: 29px; display: flex; align-items: center; border-bottom: 1px solid #901010; margin-left: -2px; padding-left: 9px; white-space: nowrap; box-sizing: border-box; }
    .head .g { color: #e85a5a; font-weight: 700; font-size: 13px; width: 18px; }
    .head .tr { color: #30d060; width: 9px; font-size: 10px; }
    .head .code { color: #101060; font-weight: 700; font-size: 14px; width: 51px; }
    .head .nm { color: #d82020; font-size: 16px; width: 93px; }
    .head .sg { color: #e85a5a; font-size: 9px; font-weight: 700; }
    .head .two { font-size: 11px; }
    .flow { height: 38px; display: grid; grid-template-columns: 1fr auto; align-items: center; border-bottom: 1px solid #901010; margin-left: -2px; padding: 2px 5px 1px 2px; box-sizing: border-box; }
    .flowbar { display: flex; gap: 3px; height: 6px; }
    .flowbar i { display: block; height: 6px; }
    .fg i { background: #087a12; }
    .fr i { background: #f05050; }
    .w102 { width: 102px; } .w43 { width: 43px; } .w26 { width: 26px; } .w37 { width: 37px; }
    .flow b { font-weight: 400; color: #087a12; text-align: right; font-size: 12px; line-height: 14px; }
    .flow b em { font-style: normal; font-size: 14px; }
    .sec { border-bottom: 1px solid #901010; margin-left: -2px; padding: 0 9px 0 3px; box-sizing: border-box; }
    .sec .r { display: flex; justify-content: space-between; align-items: center; font-size: 16px; color: #101060; white-space: nowrap; }
    .s3 { height: 79px; padding-top: 2px; }
    .s3 .r { height: 18.7px; }
    .s4 { height: 231px; padding-top: 2px; }
    .s4 .r { height: 18.9px; }
    .val { font-weight: 700; font-size: 14px; letter-spacing: 0.2px; }
    .val small { font-weight: 400; font-size: 16px; letter-spacing: 0; color: #087a12; }
    .s5 { height: 23px; display: grid; grid-template-columns: 74px 38px 1fr auto; align-items: center; font-size: 16px; color: #101060; }
    .ticks { margin-left: -2px; padding: 0 9px 0 3px; }
    .t { height: 18px; line-height: 18px; display: grid; grid-template-columns: 75px 1fr auto; grid-template-rows: 18px; align-items: center; white-space: nowrap; box-sizing: border-box; }
    .t .tm { font-weight: 700; font-size: 14px; color: #101060; }
    .t .pr { font-weight: 700; font-size: 14px; color: #e06060; letter-spacing: 0.2px; }
    .t .vo { font-weight: 700; font-size: 14px; color: #087a12; letter-spacing: 0.2px; }
    .t .vo small { font-weight: 400; font-size: 16px; letter-spacing: 0; line-height: 18px; }
    .dots { border-top: 1px dotted #303030; margin: 0 -9px -1px -3px; height: 0; }
    .mark { position: absolute; left: 8px; right: 0; top: 904px; height: 57px; background: #dfe5dc; display: flex; flex-direction: column; overflow: hidden; }
    .mark .top { display: flex; align-items: center; padding: 2px 0 0 4px; height: 28px; box-sizing: border-box; }
    .mark .gh { color: #1414f0; font-weight: 700; font-size: 20px; width: 67px; font-family: "Noto Sans CJK SC", sans-serif; white-space: nowrap; }
    .mark .sh { display: flex; color: #303030; font-size: 15px; }
    .mark .sh span { width: 18px; height: 18px; line-height: 18px; text-align: center; background: #c8c8c0; outline: 1px solid #8a8a88; outline-offset: -1px; font-family: "Noto Sans CJK SC", sans-serif; font-weight: 700; }
    .mark .url { color: #f03010; font-weight: 700; font-size: 22.6px; line-height: 26px; padding-left: 3px; white-space: nowrap; font-family: "Liberation Sans", sans-serif; }
    .mark::before { content: ""; position: absolute; left: 0; top: 0; bottom: 0; width: 20px; background: #f4f8f8; z-index: 0; }
    .mark > * { position: relative; z-index: 1; }
    svg text { font-family: "Liberation Sans", "Noto Sans CJK SC", sans-serif; }
    .grid { stroke: #183020; stroke-width: 1; stroke-dasharray: 1 3; }
    .axis { stroke: #a03030; stroke-width: 1.4; }
    .tick { stroke: #a03030; }
    .scale { font-size: 12.5px; fill: #101060; }
    .ln { fill: none; stroke-linejoin: round; stroke-linecap: round; }
    .lg { font-size: 12px; }
    .sig { font-size: 14px; }
  `;

  render() {
    const PERIODS = ["分时","1分钟","5分钟","15分钟","30分钟","60分钟","80分钟","120分钟","日线","多周期","更多 >"];
    const px = [4,37,76,115,162,207,253,299,353,386,429];
    return html`<div class="page">
      <div class="strip"></div>
      <div class="body">
        <div class="left">
          <div class="toolbar">
            <div class="periods">${PERIODS.map((p, i) => html`<span class=${p === "80分钟" ? "on" : ""} style="margin-left:${i ? px[i] - px[i - 1] - this.w(PERIODS[i - 1]) : 0}px;width:${this.w(p)}px">${p}</span>`)}</div>
            <div class="tools">${["指标","叠加","统计","画线","F10","标记","-自选","返回"].map((t) => html`<span>${t}</span>`)}</div>
          </div>
          ${mainChart()}
          <div class="sep"></div>
          ${volChart()}
          <div class="sep"></div>
          ${macdChart()}
          <div class="sep thick"></div>
          ${kdjChart()}
          <div class="timeaxis">
            <div class="c first" style="width:67px">01月09日</div>
            ${TIMES.map(([x, t], i) => html`<div class="c" style="width:${(i + 1 < TIMES.length ? TIMES[i + 1][0] : 1618) - x}px">${t}</div>`)}
            <div class="c last">80分钟</div>
          </div>
        </div>
        <div class="right">
          <div class="head"><span class="g">G</span><span class="tr">☰</span><span class="code">999999</span><span class="nm">上证指数</span><span class="sg">SG</span><span class="two">2</span></div>
          <div class="flow">
            <div class="flowbar fg"><i class="w102"></i><i class="w43"></i></div><b>118.0<em>亿</em></b>
            <div class="flowbar fr"><i class="w26"></i><i class="w37"></i></div><b>54.0<em>亿</em></b>
          </div>
          <div class="sec s3">${RIGHT_TOP.map(([l, v, u]) => html`<div class="r"><span>${l}</span><span class="val" style="color:${GN}">${v}<small>${u}</small></span></div>`)}</div>
          <div class="sec s4">${QUOTE.map(([l, v, c, u]) => html`<div class="r"><span>${l}</span><span class="val" style="color:${c}">${v}${u ? html`<small>${u}</small>` : ""}</span></div>`)}</div>
          <div class="sec s5"><span>涨家数</span><span class="val" style="color:${R}">1143</span><span>跌家数</span><span class="val" style="color:${GN}">320</span></div>
          <div class="ticks">${TICKS.map(([t, p, v, u, d]) => html`${d ? html`<div class="dots"></div>` : ""}<div class="t"><span class="tm">${t}</span><span class="pr">${p}</span><span class="vo">${v}<small>${u}</small></span></div>`)}
            <div class="t"></div>
            <div class="t"><span class="tm">1</span></div>
          </div>
          <div class="mark">
            <div class="top"><span class="gh">股海网</span><span class="sh">${[..."股票软件资源分享"].map((c) => html`<span>${c}</span>`)}</span></div>
            <div class="url">Www.Guhai.com.cn</div>
          </div>
        </div>
      </div>
    </div>`;
  }

  w(t: string) {
    const cjk = (t.match(/[^\x00-\x7f]/g) || []).length;
    return Math.ceil(cjk * 12 + (t.length - cjk) * 6.7);
  }
}
